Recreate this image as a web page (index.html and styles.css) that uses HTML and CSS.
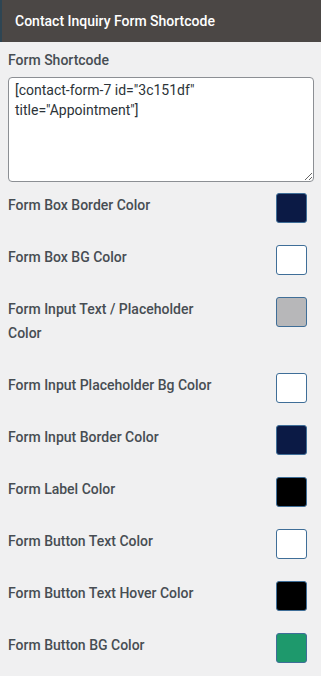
FILE: index.html
```html
<!DOCTYPE html>
<html lang="en">
<head>
<meta charset="utf-8">
<title>Contact Inquiry Form Shortcode</title>
<link rel="stylesheet" href="styles.css">
</head>
<body>
<div class="panel">
  <div class="panel-header">Contact Inquiry Form Shortcode</div>
  <div class="panel-body">
    <div class="field-label">Form Shortcode</div>
    <textarea class="shortcode" spellcheck="false">[contact-form-7 id="3c151df" title="Appointment"]</textarea>
    <div class="rows">
      <div class="row"><div class="row-label">Form Box Border Color</div><span class="swatch navy"></span></div>
      <div class="row"><div class="row-label">Form Box BG Color</div><span class="swatch white"></span></div>
      <div class="row"><div class="row-label">Form Input Text / Placeholder Color</div><span class="swatch gray"></span></div>
      <div class="row"><div class="row-label">Form Input Placeholder Bg Color</div><span class="swatch white"></span></div>
      <div class="row"><div class="row-label">Form Input Border Color</div><span class="swatch navy"></span></div>
      <div class="row"><div class="row-label">Form Label Color</div><span class="swatch black"></span></div>
      <div class="row"><div class="row-label">Form Button Text Color</div><span class="swatch white"></span></div>
      <div class="row"><div class="row-label">Form Button Text Hover Color</div><span class="swatch black"></span></div>
      <div class="row"><div class="row-label">Form Button BG Color</div><span class="swatch green"></span></div>
    </div>
  </div>
</div>
</body>
</html>
```
FILE: styles.css
```css
html, body {
  margin: 0;
  padding: 0;
  background: #f0f0f1;
  overflow: hidden;
}
body {
  font-family: Roboto, "Liberation Sans", Arial, sans-serif;
  font-size: 14px;
  color: #474d53;
}
.panel-header {
  height: 42px;
  line-height: 42px;
  background: #4b4745;
  border-left: 2px solid #2e4553;
  color: #ffffff;
  font-weight: 500;
  padding-left: 13px;
}
.panel-body {
  padding: 6px 7px 0 8px;
}
.field-label {
  font-weight: 500;
  line-height: 24px;
}
.shortcode {
  display: block;
  box-sizing: border-box;
  width: 100%;
  height: 105px;
  margin: 5px 0 0 0;
  padding: 2px 6px;
  border: 1px solid #8c8f94;
  border-radius: 4px;
  background: #ffffff;
  color: #2c3338;
  font-family: Roboto, "Liberation Sans", Arial, sans-serif;
  font-size: 14px;
  line-height: 1.42857143;
  resize: vertical;
  outline: none;
}
.rows {
  padding-top: 11px;
}
.row {
  display: flex;
  justify-content: space-between;
  align-items: flex-start;
  padding-bottom: 22px;
}
.row:last-child {
  padding-bottom: 0;
}
.row-label {
  width: 214px;
  font-weight: 500;
  line-height: 24px;
  padding-bottom: 6px;
}
.swatch {
  display: block;
  box-sizing: border-box;
  width: 31px;
  height: 30px;
  margin-right: 7px;
  border: 1px solid #3f6e98;
  border-radius: 3px;
}
.navy { background: #0b1a45; }
.white { background: #ffffff; }
.gray { background: #b7b7b9; }
.black { background: #000000; }
.green { background: #1e996c; }
```
